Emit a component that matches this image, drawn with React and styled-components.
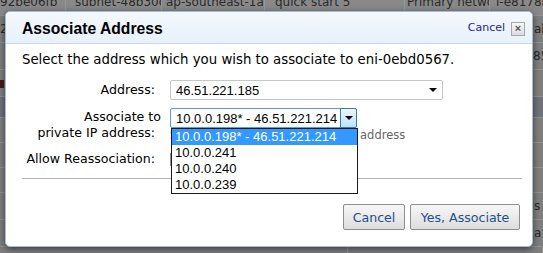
import React from "react";
import styled, { createGlobalStyle } from "styled-components";

const GlobalStyle = createGlobalStyle`
  html, body {
    margin: 0;
    padding: 0;
  }
  body {
    width: 543px;
    height: 253px;
    overflow: hidden;
    background: #7f7f7f;
  }
`;

const Page = styled.div`
  position: relative;
  width: 543px;
  height: 253px;
  overflow: hidden;
  background: #7f7f7f;
  font-family: "DejaVu Sans", Verdana, sans-serif;
`;

// dimmed table behind the dialog
const Grid = styled.div`
  display: flex;
  flex-direction: column;
  margin-top: -10px;
`;

const GridRow = styled.div`
  display: flex;
  flex: none;
  height: ${(p) => p.h}px;
  background: ${(p) => p.bg || "#7f7f7f"};
  border-bottom: 1px solid #939393;
`;

const GridCell = styled.div`
  flex: none;
  width: ${(p) => p.w}px;
  padding-left: ${(p) => p.pad}px;
  box-sizing: border-box;
  border-right: 1px solid #989898;
  font-size: 12px;
  font-weight: ${(p) => (p.bold ? 700 : 400)};
  color: #2a2a2a;
  line-height: ${(p) => p.h}px;
  white-space: nowrap;
  overflow: hidden;
`;

const RowIcon = styled.span`
  display: inline-block;
  width: 4px;
  height: 8px;
  background: #4a1a1a;
  vertical-align: middle;
`;

// dialog
const Modal = styled.div`
  position: absolute;
  left: 5px;
  top: 11px;
  width: 528px;
  box-sizing: border-box;
  background: #fff;
  border: 1px solid #a9bccf;
  border-radius: 5px;
  box-shadow: 0 2px 7px rgba(0, 0, 0, 0.55);
  overflow: hidden;
`;

const Header = styled.div`
  display: flex;
  align-items: center;
  justify-content: space-between;
  height: 32px;
  box-sizing: border-box;
  padding: 2px 7px 0 16px;
  background: linear-gradient(#f3f8fd, #e8f1fa);
  border-bottom: 1px solid #c6dbef;
`;

const Title = styled.div`
  font-family: "Liberation Sans", Arial, sans-serif;
  font-weight: 700;
  font-size: 15.7px;
  color: #000;
`;

const HeaderActions = styled.div`
  display: flex;
  align-items: center;
  gap: 6px;
`;

const CancelLink = styled.a`
  font-size: 11px;
  color: #1f1f8a;
  text-decoration: none;
  margin-top: -2px;
`;

const CloseBox = styled.span`
  display: flex;
  align-items: center;
  justify-content: center;
  width: 12px;
  height: 12px;
  border: 1px solid #a8a8a8;
  background: linear-gradient(#f7f7f7, #dcdcdc);
  color: #555;
  font-size: 11px;
  line-height: 1;
  font-family: "Liberation Sans", Arial, sans-serif;
  font-weight: 700;
`;

const Body = styled.div`
  padding: 8px 10px 16px 16px;
`;

const Intro = styled.div`
  font-size: 13.3px;
  line-height: 16px;
  color: #000;
  white-space: nowrap;
`;

const Form = styled.div`
  display: grid;
  grid-template-columns: 133px 1fr;
  column-gap: 15px;
  row-gap: 8px;
  margin-top: 12px;
`;

const Label = styled.div`
  font-size: 12.6px;
  line-height: ${(p) => (p.two ? "16px" : "20px")};
  padding-top: ${(p) => (p.two ? "1px" : "0")};
  margin-top: ${(p) => p.shift || 0}px;
  text-align: right;
  color: #000;
  white-space: nowrap;
`;

const LabelLine = styled.span`
  display: block;
  margin-right: ${(p) => p.hang || 0}px;
`;

const Field = styled.div`
  display: flex;
  flex-direction: column;
  align-items: flex-start;
`;

const SelectWrap = styled.div`
  position: relative;
`;

const Select = styled.div`
  display: flex;
  align-items: center;
  justify-content: space-between;
  width: ${(p) => p.w}px;
  height: 20px;
  box-sizing: border-box;
  padding-left: 5px;
  border: 1px solid ${(p) => (p.focused ? "#5a9fd8" : "#c3c7cc")};
  border-radius: 2px;
  background: #fff;
  font-family: "Liberation Sans", Arial, sans-serif;
  font-size: 13px;
  color: #000;
`;

const Caret = styled.span`
  width: 0;
  height: 0;
  margin-right: 5px;
  border-left: 4px solid transparent;
  border-right: 4px solid transparent;
  border-top: 4px solid #000;
`;

const ArrowButton = styled.span`
  display: flex;
  align-items: center;
  justify-content: center;
  align-self: stretch;
  width: 15px;
  margin: -1px -1px -1px 0;
  border: 1px solid #3d7bad;
  border-radius: 0 2px 2px 0;
  background: linear-gradient(#eaf6fd, #bfe2f7);
`;

const ArrowGlyph = styled.span`
  width: 0;
  height: 0;
  border-left: 4px solid transparent;
  border-right: 4px solid transparent;
  border-top: 4px solid #000;
`;

const Listbox = styled.ul`
  position: absolute;
  left: 1px;
  top: 20px;
  width: 187px;
  box-sizing: border-box;
  margin: 0;
  padding: 0;
  list-style: none;
  border: 1px solid #1a1a1a;
  background: #fff;
  z-index: 2;
`;

const Option = styled.li`
  height: 16px;
  line-height: 16px;
  padding-left: 3px;
  font-family: "Liberation Sans", Arial, sans-serif;
  font-size: 13px;
  color: ${(p) => (p.active ? "#fff" : "#000")};
  background: ${(p) => (p.active ? "#3399ff" : "#fff")};
  white-space: nowrap;
`;

const Hint = styled.div`
  margin-top: -1px;
  font-size: 11.5px;
  line-height: 16px;
  word-spacing: -1px;
  color: #666;
  white-space: nowrap;
`;

const Checkbox = styled.span`
  display: block;
  width: 11px;
  height: 11px;
  margin-top: 2px;
  border: 1px solid #8f8f8f;
  background: #fff;
`;

const Divider = styled.div`
  height: 1px;
  margin-top: 9px;
  background: #b4b4b4;
`;

const Footer = styled.div`
  display: flex;
  justify-content: flex-end;
  gap: 5px;
  margin-top: 25px;
  padding-right: 2px;
`;

const Button = styled.button`
  width: ${(p) => p.w}px;
  height: 26px;
  padding: 0;
  border: 1px solid #8e8e8e;
  border-radius: 2px;
  background: linear-gradient(#f7f7f7, #dddddd);
  font-family: "DejaVu Sans", Verdana, sans-serif;
  font-size: 12.6px;
  color: #1d4f8c;
`;

const rows = [
  {
    h: 25,
    bg: "#898989",
    cells: [
      ["92be06fb", 66, 0],
      ["subnet-48b30c2d", 96, 9],
      ["ap-southeast-1a", 103, 4],
      ["quick start 5", 140, 10],
      ["Primary network interface", 85, 2],
      ["i-e8178bc5", 60, 6],
    ],
  },
  { h: 26, cells: [["2a9f71c3", 532, 0], ["ab", 20, 2]] },
  { h: 26, cells: [["", 532, 0], ["85", 20, 1]] },
  { h: 26, cells: [["icon", 532, 0], ["", 20, 1]] },
  { h: 20, bg: "#6f747b", cells: [["", 532, 0], ["", 20, 1]] },
  { h: 24, cells: [["", 532, 0], ["", 20, 1]] },
  { h: 24, cells: [["", 532, 0], ["", 20, 1]] },
  { h: 24, cells: [["", 532, 0], ["", 20, 1]] },
  { h: 26, cells: [["", 532, 0], ["s", 20, 2]] },
  { h: 26, cells: [["", 532, 0], ["a", 20, 2]] },
];

const options = [
  "10.0.0.198* - 46.51.221.214",
  "10.0.0.241",
  "10.0.0.240",
  "10.0.0.239",
];

const App = () => {
  return (
    <Page>
      <GlobalStyle />
      <Grid>
        {rows.map((row, i) => (
          <GridRow key={i} h={row.h} bg={row.bg}>
            {row.cells.map(([text, w, pad], j) => (
              <GridCell key={j} w={w} pad={pad} h={row.h}>
                {text === "icon" ? <RowIcon /> : text}
              </GridCell>
            ))}
          </GridRow>
        ))}
        <GridRow h={26}>
          <GridCell w={348} pad={48} h={26}>
            88.7 ... f 47.0 | 0 |
          </GridCell>
          <GridCell w={195} pad={13} h={26} bold>
            Description:
          </GridCell>
        </GridRow>
      </Grid>

      <Modal>
        <Header>
          <Title>Associate Address</Title>
          <HeaderActions>
            <CancelLink href="#">Cancel</CancelLink>
            <CloseBox>×</CloseBox>
          </HeaderActions>
        </Header>
        <Body>
          <Intro>
            Select the address which you wish to associate to eni-0ebd0567.
          </Intro>
          <Form>
            <Label>Address:</Label>
            <Field>
              <Select w={273}>
                46.51.221.185
                <Caret />
              </Select>
            </Field>

            <Label two>
              <LabelLine hang={-6}>Associate to</LabelLine>
              <LabelLine>private IP address:</LabelLine>
            </Label>
            <Field>
              <SelectWrap>
                <Select w={187} focused>
                  10.0.0.198* - 46.51.221.214
                  <ArrowButton>
                    <ArrowGlyph />
                  </ArrowButton>
                </Select>
                <Listbox>
                  {options.map((o, i) => (
                    <Option key={o} active={i === 0}>
                      {o}
                    </Option>
                  ))}
                </Listbox>
              </SelectWrap>
              <Hint>Select the new primary private IP address</Hint>
            </Field>

            <Label shift={-2}>Allow Reassociation:</Label>
            <Field>
              <Checkbox />
            </Field>
          </Form>
          <Divider />
          <Footer>
            <Button w={62}>Cancel</Button>
            <Button w={110}>Yes, Associate</Button>
          </Footer>
        </Body>
      </Modal>
    </Page>
  );
};

export default App;
